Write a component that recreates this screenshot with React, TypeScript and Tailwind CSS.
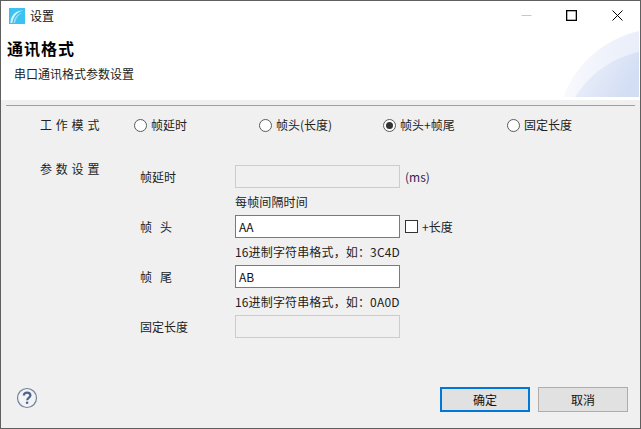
const modes = [
  { label: '帧延时', checked: false, width: 'w-[125px]' },
  { label: '帧头(长度)', checked: false, width: 'w-[124px]' },
  { label: '帧头+帧尾', checked: true, width: 'w-[124px]' },
  { label: '固定长度', checked: false, width: 'w-[100px]' },
];

function Radio({ label, checked, width }: { label: string; checked: boolean; width: string }) {
  return (
    <div className={`flex items-center gap-[4px] ${width}`}>
      <span className="flex h-[13px] w-[13px] items-center justify-center rounded-full border border-[#5a5a5a] bg-white">
        {checked && <span className="h-[7px] w-[7px] rounded-full bg-[#333333]" />}
      </span>
      <span>{label}</span>
    </div>
  );
}

function Field({ value, disabled }: { value?: string; disabled?: boolean }) {
  return (
    <div
      className={
        disabled
          ? 'h-[23px] w-[165px] border border-[#cccccc] bg-[#f0f0f0]'
          : 'flex h-[23px] w-[165px] items-center border border-[#7a7a7a] bg-white pl-[3px] text-[#111111]'
      }
    >
      {value}
    </div>
  );
}

function Hint({ text }: { text: string }) {
  return <div className="flex h-[27px] items-center pl-[95px] pt-[1px] tracking-[0.15px]">{text}</div>;
}

function Row({ label, children }: { label: string; children: React.ReactNode }) {
  return (
    <div className="flex items-center">
      <div className="w-[95px] whitespace-pre">{label}</div>
      {children}
    </div>
  );
}

export default function App() {
  return (
    <div className="flex h-[429px] w-[641px] flex-col overflow-hidden border border-[#5f5f5f] bg-[#f0f0f0] font-['Noto_Sans_CJK_SC','Noto_Sans',sans-serif] text-[12px] leading-[16px] text-[#222222]">
      {/* header */}
      <div className="relative h-[99px] bg-white">
        <svg className="absolute bottom-[3px] right-[1px]" width="75" height="66" viewBox="0 0 75 66">
          <defs>
            <linearGradient id="outerFade" x1="0" y1="0" x2="1" y2="0">
              <stop offset="0" stopColor="#f8f9fd" />
              <stop offset="1" stopColor="#e9eefa" />
            </linearGradient>
            <linearGradient id="innerFade" x1="0" y1="0" x2="1" y2="0.4">
              <stop offset="0" stopColor="#f0f3fb" />
              <stop offset="1" stopColor="#d3def4" />
            </linearGradient>
          </defs>
          <path d="M0 66C8 38 38 8 75 0V66Z" fill="url(#outerFade)" />
          <path d="M11 66C26 42 50 26 75 21V66Z" fill="url(#innerFade)" />
        </svg>
        <div className="relative flex h-[29px] items-center">
          <svg className="ml-[8px]" width="16" height="16" viewBox="0 0 16 16">
            <rect width="16" height="16" fill="#3cc2f0" />
            <path d="M1.5 15C1.5 9 5 2.5 14.5 2.2C8 3.6 4.4 8.5 3.2 15Z" fill="#d8f2fc" />
            <path d="M4.6 15C5 10.5 8 6 13.5 4.6C9 7 6.8 10.5 6 15Z" fill="#9fe0f8" />
          </svg>
          <span className="ml-[5px] text-[#111111]">设置</span>
          <div className="ml-auto flex items-center pr-[17px]">
            <svg width="11" height="11" viewBox="0 0 11 11">
              <path d="M0.5 5.5H10.5" stroke="#c8c8c8" strokeWidth="1" />
            </svg>
            <svg className="ml-[34px]" width="11" height="11" viewBox="0 0 11 11">
              <rect x="0.65" y="0.65" width="9.7" height="9.7" fill="none" stroke="#000000" strokeWidth="1.3" />
            </svg>
            <svg className="ml-[35px]" width="11" height="11" viewBox="0 0 11 11">
              <path d="M0.5 0.5L10.5 10.5M10.5 0.5L0.5 10.5" stroke="#000000" strokeWidth="1" />
            </svg>
          </div>
        </div>
        <div className="relative ml-[6px] mt-[7px] text-[16px] font-bold leading-[22px] tracking-[1px] text-black">通讯格式</div>
        <div className="relative ml-[13px] mt-[7px]">串口通讯格式参数设置</div>
      </div>

      <div className="mx-[5px] mt-[5px] h-[1px] bg-[#a0a0a0]" />

      {/* work mode */}
      <div className="mt-[11px] flex items-center pl-[39px]">
        <div className="w-[94px] tracking-[3.8px]">工作模式</div>
        {modes.map((m) => (
          <Radio key={m.label} {...m} />
        ))}
      </div>

      {/* parameters */}
      <div className="mt-[28px] flex pl-[39px]">
        <div className="w-[100px] tracking-[3.8px]">参数设置</div>
        <div className="mt-[4px] flex flex-col">
          <Row label="帧延时">
            <Field disabled />
            <span className="ml-[5px] text-[#3a2050]">(ms)</span>
          </Row>
          <Hint text="每帧间隔时间" />
          <Row label="帧   头">
            <Field value="AA" />
            <span className="ml-[5px] h-[13px] w-[13px] border border-[#333333] bg-white" />
            <span className="ml-[4px]">+长度</span>
          </Row>
          <Hint text="16进制字符串格式，如：3C4D" />
          <Row label="帧   尾">
            <Field value="AB" />
          </Row>
          <Hint text="16进制字符串格式，如：0A0D" />
          <Row label="固定长度">
            <Field disabled />
          </Row>
        </div>
      </div>

      {/* footer */}
      <div className="mt-auto flex items-center pb-[16px] pl-[15px] pr-[12px]">
        <svg className="mb-[3px]" width="22" height="22" viewBox="0 0 22 22">
          <circle cx="11" cy="11" r="9.5" fill="#f2f3f6" stroke="#72829c" strokeWidth="1.2" />
          <path d="M7.8 8.6C7.8 6.7 9.3 5.6 11 5.6C12.8 5.6 14.4 6.7 14.4 8.4C14.4 10.6 11.2 10.6 11.2 13.2" fill="none" stroke="#4e6389" strokeWidth="2.2" />
          <circle cx="11.1" cy="15.8" r="1.3" fill="#4e6389" />
        </svg>
        <button className="ml-auto h-[25px] w-[90px] border-2 border-[#0078d7] bg-[#e1e1e1] text-[#111111]">确定</button>
        <button className="ml-[8px] h-[25px] w-[90px] border border-[#adadad] bg-[#e1e1e1] text-[#111111]">取消</button>
      </div>
    </div>
  );
}
